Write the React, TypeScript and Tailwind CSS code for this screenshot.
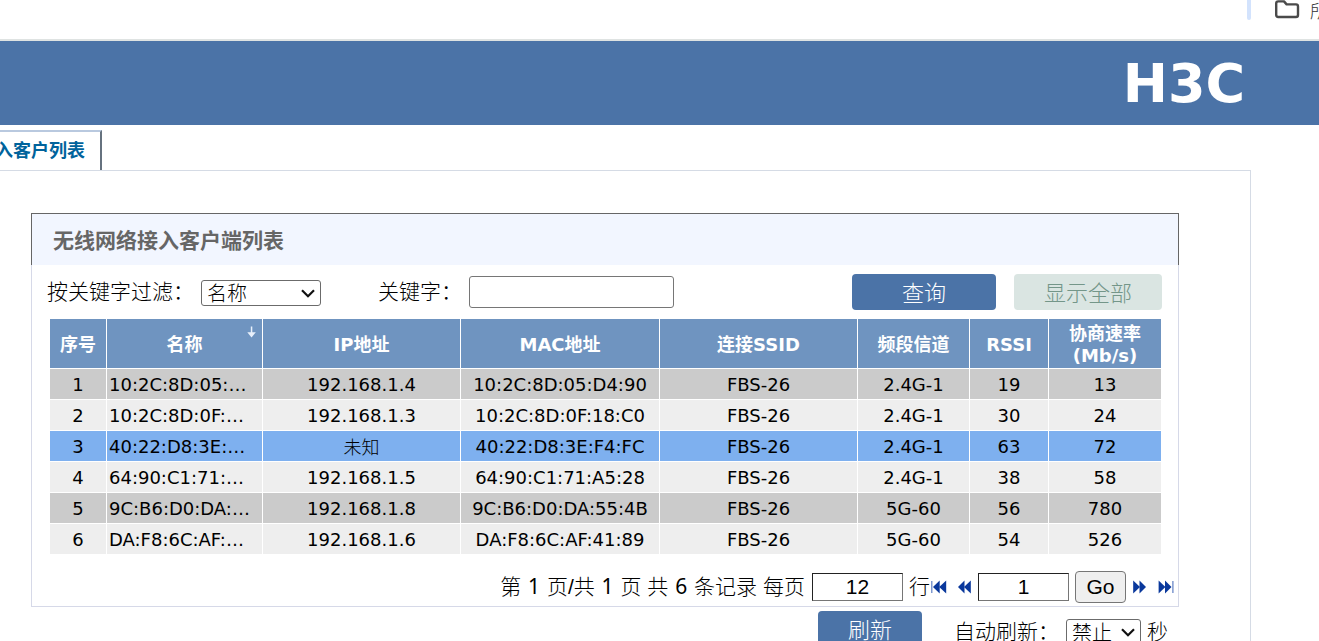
import React from 'react';

type Client = {
  id: number;
  name: string;
  ip: string;
  mac: string;
  ssid: string;
  channel: string;
  rssi: number;
  rate: number;
};

const clients: Client[] = [
  { id: 1, name: '10:2C:8D:05:…', ip: '192.168.1.4', mac: '10:2C:8D:05:D4:90', ssid: 'FBS-26', channel: '2.4G-1', rssi: 19, rate: 13 },
  { id: 2, name: '10:2C:8D:0F:…', ip: '192.168.1.3', mac: '10:2C:8D:0F:18:C0', ssid: 'FBS-26', channel: '2.4G-1', rssi: 30, rate: 24 },
  { id: 3, name: '40:22:D8:3E:…', ip: '未知', mac: '40:22:D8:3E:F4:FC', ssid: 'FBS-26', channel: '2.4G-1', rssi: 63, rate: 72 },
  { id: 4, name: '64:90:C1:71:…', ip: '192.168.1.5', mac: '64:90:C1:71:A5:28', ssid: 'FBS-26', channel: '2.4G-1', rssi: 38, rate: 58 },
  { id: 5, name: '9C:B6:D0:DA:…', ip: '192.168.1.8', mac: '9C:B6:D0:DA:55:4B', ssid: 'FBS-26', channel: '5G-60', rssi: 56, rate: 780 },
  { id: 6, name: 'DA:F8:6C:AF:…', ip: '192.168.1.6', mac: 'DA:F8:6C:AF:41:89', ssid: 'FBS-26', channel: '5G-60', rssi: 54, rate: 526 },
];

const selectedId = 3;

function rowColor(c: Client) {
  if (c.id === selectedId) return 'bg-[#7eb0ef]';
  return c.id % 2 ? 'bg-[#cbcbcb]' : 'bg-[#eeeeee]';
}

function FolderIcon() {
  return (
    <svg className="shrink-0" width="26" height="20" viewBox="0 0 26 20" fill="none" stroke="#4a4a4a" strokeWidth="2.4" strokeLinejoin="round">
      <path d="M2.2 3.4 Q2.2 1.4 4.2 1.4 H10 L12.6 4.4 H22 Q24 4.4 24 6.4 V15 Q24 17 22 17 H4.2 Q2.2 17 2.2 15 Z" />
    </svg>
  );
}

function PrevIcon() {
  return (
    <svg width="13" height="14" viewBox="0 0 13 14" fill="#0a389c">
      <polygon points="0,7 6.5,0.5 6.5,13.5" />
      <polygon points="6,7 12.8,0.5 12.8,13.5" />
    </svg>
  );
}

function FirstIcon() {
  return (
    <svg width="17" height="14" viewBox="0 0 17 14" fill="#0a389c">
      <rect x="1.2" y="1" width="1.2" height="12" fill="#5f7fc4" />
      <polygon points="3,7 9.7,0.5 9.7,13.5" />
      <polygon points="9.2,7 16.2,0.5 16.2,13.5" />
    </svg>
  );
}

function NextIcon() {
  return (
    <svg width="13" height="14" viewBox="0 0 13 14" fill="#0a389c">
      <polygon points="0.2,0.5 7,7 0.2,13.5" />
      <polygon points="6.5,0.5 13,7 6.5,13.5" />
    </svg>
  );
}

function LastIcon() {
  return (
    <svg width="16" height="14" viewBox="0 0 16 14" fill="#0a389c">
      <polygon points="0.6,0.5 7.4,7 0.6,13.5" />
      <polygon points="7,0.5 13.5,7 7,13.5" />
      <rect x="14.3" y="1" width="1.2" height="12" fill="#5f7fc4" />
    </svg>
  );
}

function Chevron() {
  return (
    <svg className="pointer-events-none absolute top-[9px] right-1.5" width="14" height="9" viewBox="0 0 14 9" fill="none" stroke="#111111" strokeWidth="2.2">
      <path d="M1 1.2 L7 7.2 L13 1.2" />
    </svg>
  );
}

const th = 'border-r border-b border-white bg-[#6f94c0] p-0 pt-0.5 last:border-r-0';
const td = 'border-r border-b border-white p-0 pt-0.5 text-center last:border-r-0';
const select = 'h-[26px] w-full appearance-none rounded-[3px] border border-[#6b6b6b] bg-white pt-0.5 pl-[5px] text-[20px] leading-[22px]';
const pageBox = 'h-7 w-[91px] border border-t-[#222222] border-r-[#767676] border-b-[#767676] border-l-[#222222] text-center font-normal';

function Num({ children }: { children: React.ReactNode }) {
  return <span className="px-px font-['Noto_Sans'] font-normal">{children}</span>;
}

export default function App() {
  return (
    <div className="flex h-screen flex-col overflow-hidden bg-white font-['Liberation_Sans','Noto_Sans_CJK_SC',sans-serif] text-[21px] leading-7 font-light text-black">
      <div className="flex h-[41px] shrink-0 justify-end overflow-hidden border-b-2 border-[#dfe3e2]">
        <div className="h-5 w-1 rounded-b-sm bg-[#d3e3fd]" />
        <a href="#bookmarks" className="ml-[23px] flex h-6 w-[45px] items-start overflow-hidden">
          <FolderIcon />
          <span className="ml-[10px] shrink-0 text-[18px] leading-6 text-[#333333]">所有书签</span>
        </a>
      </div>

      <header className="flex h-[84px] shrink-0 items-center justify-end bg-[#4b73a7] pr-[68px]">
        <svg width="134" height="64" viewBox="0 0 134 64" role="img" aria-label="H3C">
          <text x="67" y="51" textAnchor="middle" fill="#ffffff" fontFamily="DejaVu Sans" fontWeight="700" fontSize="54">H3C</text>
        </svg>
      </header>

      <nav className="flex shrink-0 pt-[5px]">
        <a href="#clients" className="flex h-10 w-[102px] items-center justify-end overflow-hidden border-t-2 border-r-2 border-t-[#b9c9df] border-r-[#66727f] pr-[15px] text-[18px] font-bold whitespace-nowrap text-[#00639c]">
          无线网络接入客户列表
        </a>
      </nav>

      <main className="mr-[68px] grow border-t border-r border-[#d5dbe5] pt-[42px] pr-[71px] pl-[31px]">
        <section className="border-r border-b border-l border-[#d6d9e8]">
          <h1 className="-mx-px flex h-[52px] items-center border-t border-r border-l border-[#666666] bg-[#f2f6ff] pt-0.5 pl-[21px] font-bold text-[#666666]">
            无线网络接入客户端列表
          </h1>

          <form className="flex h-[54px] items-center pr-4 pl-[15px]" onSubmit={(e) => e.preventDefault()}>
            <label htmlFor="field" className="w-[154px] shrink-0 whitespace-nowrap">按关键字过滤：</label>
            <span className="relative mt-0.5 flex w-[120px] shrink-0">
              <select id="field" className={select}>
                <option>名称</option>
              </select>
              <Chevron />
            </span>
            <label htmlFor="keyword" className="ml-[57px] w-[91px] shrink-0 whitespace-nowrap">关键字：</label>
            <input id="keyword" type="text" className="h-8 w-[205px] rounded-[3px] border border-[#767676] px-1" />
            <button type="submit" className="ml-auto h-9 w-36 rounded-[4px] bg-[#4b73a7] pt-1 text-[22px] text-white">查询</button>
            <button type="button" disabled className="ml-[18px] h-9 w-[148px] rounded-[4px] bg-[#dae5e2] pt-1 text-[22px] text-[#749689]">显示全部</button>
          </form>

          <div className="pr-[17px] pl-[18px]">
            <table className="w-full table-fixed border-separate border-spacing-0 font-['DejaVu_Sans','Noto_Sans_CJK_SC',sans-serif] text-[18px] leading-[22px] font-normal">
              <colgroup>
                <col className="w-[57px]" />
                <col className="w-[156px]" />
                <col className="w-[198px]" />
                <col className="w-[199px]" />
                <col className="w-[198px]" />
                <col className="w-[112px]" />
                <col className="w-[79px]" />
                <col className="w-[112px]" />
              </colgroup>
              <thead>
                <tr className="h-[50px] font-bold text-white">
                  <th className={th}>序号</th>
                  <th className={th}>
                    <span className="relative block">
                      名称
                      <svg className="absolute -top-2 right-1.5" width="9" height="12" viewBox="0 0 9 12" fill="#e8f0fb">
                        <rect x="3.8" y="0.5" width="1.5" height="8" />
                        <polygon points="0.3,6.2 8.8,6.2 4.5,11.5" />
                      </svg>
                    </span>
                  </th>
                  <th className={th}>IP地址</th>
                  <th className={th}>MAC地址</th>
                  <th className={th}>连接SSID</th>
                  <th className={th}>频段信道</th>
                  <th className={th}>RSSI</th>
                  <th className={th}>协商速率<br />(Mb/s)</th>
                </tr>
              </thead>
              <tbody>
                {clients.map((c) => (
                  <tr key={c.id} className={`h-[31px] ${rowColor(c)}`}>
                    <td className={td}>{c.id}</td>
                    <td className="border-r border-b border-white p-0 pt-0.5 pl-0.5 text-left whitespace-nowrap">{c.name}</td>
                    <td className={td}>
                      {c.ip === '未知' ? <span className="font-['Noto_Sans_CJK_SC'] font-light">{c.ip}</span> : c.ip}
                    </td>
                    <td className={td}>{c.mac}</td>
                    <td className={td}>{c.ssid}</td>
                    <td className={td}>{c.channel}</td>
                    <td className={td}>{c.rssi}</td>
                    <td className={td}>{c.rate}</td>
                  </tr>
                ))}
              </tbody>
            </table>
          </div>

          <div className="flex h-[51px] items-center justify-end pt-3 pr-1">
            <span className="whitespace-nowrap">第 <Num>1</Num> 页/共 <Num>1</Num> 页 共 <Num>6</Num> 条记录</span>
            <label htmlFor="page-size" className="ml-1.5 whitespace-nowrap">每页</label>
            <input id="page-size" type="text" defaultValue="12" className={`ml-[7px] ${pageBox}`} />
            <span className="ml-1.5">行</span>
            <button type="button" aria-label="首页"><FirstIcon /></button>
            <button type="button" aria-label="上一页" className="ml-[11px]"><PrevIcon /></button>
            <input type="text" aria-label="页码" defaultValue="1" className={`ml-[7px] ${pageBox}`} />
            <button type="button" className="ml-1.5 h-8 w-[51px] rounded-[4px] border border-[#767676] bg-[#efefef] font-normal">Go</button>
            <button type="button" aria-label="下一页" className="ml-[7px]"><NextIcon /></button>
            <button type="button" aria-label="末页" className="ml-3"><LastIcon /></button>
          </div>
        </section>

        <div className="mt-1 flex items-start justify-end pr-[11px]">
          <button type="button" className="h-9 w-[104px] rounded-[4px] bg-[#4b73a7] pt-1 text-[22px] text-white">刷新</button>
          <label htmlFor="auto-refresh" className="mt-[7px] ml-8 w-28 whitespace-nowrap">自动刷新：</label>
          <span className="relative mt-2 flex w-[75px]">
            <select id="auto-refresh" className={select}>
              <option>禁止</option>
            </select>
            <Chevron />
          </span>
          <span className="mt-[7px] ml-1.5">秒</span>
        </div>
      </main>
    </div>
  );
}
